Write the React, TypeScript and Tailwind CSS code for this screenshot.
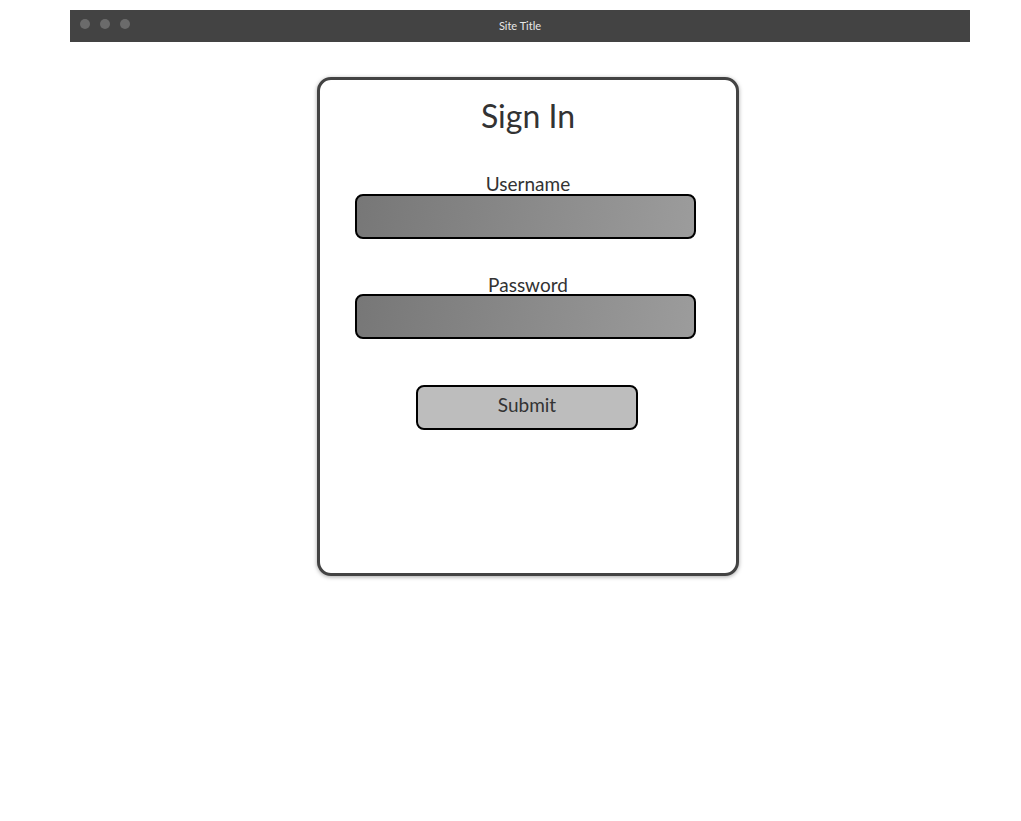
export default function App() {
  return (
    <div className="min-h-[821px] bg-white pt-[10px] font-['Lato',sans-serif] text-[#333]">
      {/* browser chrome */}
      <div className="relative ml-[70px] flex h-8 w-[900px] items-center bg-[#434343]">
        <div className="flex gap-[10px] pl-[10px] -mt-[4px]">
          <span className="h-[10px] w-[10px] rounded-full bg-[#6b6b6b]" />
          <span className="h-[10px] w-[10px] rounded-full bg-[#6b6b6b]" />
          <span className="h-[10px] w-[10px] rounded-full bg-[#6b6b6b]" />
        </div>
        <span className="absolute inset-x-0 top-[8px] text-center text-[11px] leading-4 text-[#e8e8e8]">
          Site Title
        </span>
      </div>

      {/* sign-in card */}
      <div className="ml-[317px] mt-[35px] flex h-[499px] w-[422px] flex-col items-center rounded-[14px] border-[3px] border-[#434343] bg-white shadow-[0_1px_4px_rgba(0,0,0,0.35)]">
        <h1 className="mt-[16px] text-[32px] leading-10 font-normal">Sign In</h1>

        <label className="mt-[36px] text-center text-[19px] leading-6">Username</label>
        <div className="mt-[-2px] h-[45px] w-[341px] -translate-x-[3px] rounded-[8px] border-2 border-black bg-[linear-gradient(100deg,#777777,#9c9c9c)]" />

        <label className="mt-[34px] text-center text-[19px] leading-6">Password</label>
        <div className="mt-[-3px] h-[45px] w-[341px] -translate-x-[3px] rounded-[8px] border-2 border-black bg-[linear-gradient(100deg,#777777,#9c9c9c)]" />

        <button className="mt-[46px] h-[45px] w-[222px] -translate-x-[1px] rounded-[8px] border-2 border-black bg-[#bdbdbd] pb-[4px] text-[19px] text-[#333]">
          Submit
        </button>
      </div>
    </div>
  );
}
